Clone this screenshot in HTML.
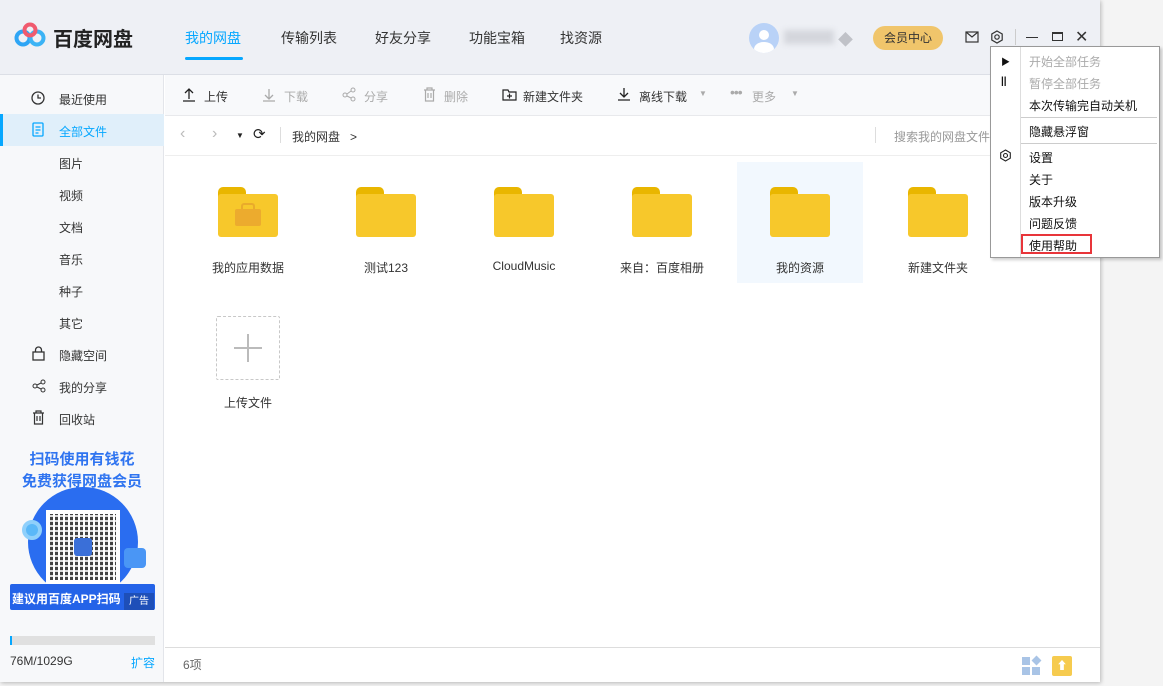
<!DOCTYPE html><html><head><meta charset="utf-8"><style>
*{margin:0;padding:0;box-sizing:border-box}
body{width:1163px;height:686px;background:#f4f4f4;font-family:"Liberation Sans","Noto Sans CJK SC",sans-serif;font-size:12px;color:#333;position:relative;overflow:hidden}
.win{position:absolute;left:0;top:0;width:1100px;height:682px;background:#fff;box-shadow:1px 1px 4px rgba(0,0,0,.25);overflow:hidden}
.hdr{position:absolute;left:0;top:0;width:1100px;height:75px;background:#eef0f5;border-bottom:1px solid #dcdfe6}
.a{position:absolute;white-space:nowrap}
.nav{top:28px;font-size:14px;color:#333}
.side{position:absolute;left:0;top:75px;width:164px;height:607px;background:#f7f8fa;border-right:1px solid #e3e5ea}
.si{position:absolute;left:59px;font-size:12px;color:#333}
.tb{position:absolute;left:165px;top:75px;width:935px;height:41px;background:#f8f9fb;border-bottom:1px solid #e8e9ec}
.tbi{top:88px;font-size:12px}
.g{color:#aaa}
.fold{position:absolute;width:60px;height:50px}
.fold:before{content:"";position:absolute;left:0;top:0;width:28px;height:12px;background:#e9b600;border-radius:5px 5px 0 0}
.fold:after{content:"";position:absolute;left:0;top:7px;width:60px;height:43px;background:#f7c82b;border-radius:3px}
.lbl{position:absolute;top:259px;width:126px;text-align:center;font-size:12px;color:#333}
.menu{position:absolute;left:990px;top:46px;width:170px;height:212px;background:#fff;border:1px solid #999;box-shadow:2px 2px 3px rgba(0,0,0,.2)}
.mi{position:absolute;left:38px;font-size:12px;color:#111}
</style></head><body>
<div class="win">
<div class="hdr">
<svg class="a" style="left:14px;top:22px" width="32" height="26" viewBox="0 0 32 26"><circle cx="9" cy="16" r="6.5" fill="none" stroke="#2ea5f5" stroke-width="4"/><circle cx="23" cy="16" r="6.5" fill="none" stroke="#3bb3f5" stroke-width="4"/><circle cx="16" cy="8" r="5.5" fill="none" stroke="#f05a6e" stroke-width="4"/></svg>
<div class="a" style="left:53px;top:23px;font-size:20px;font-weight:bold;color:#222">百度网盘</div>
<div class="a nav" style="left:185px;color:#06a7ff">我的网盘</div>
<div class="a" style="left:185px;top:57px;width:58px;height:3px;background:#06a7ff;border-radius:2px"></div>
<div class="a nav" style="left:281px">传输列表</div>
<div class="a nav" style="left:375px">好友分享</div>
<div class="a nav" style="left:469px">功能宝箱</div>
<div class="a nav" style="left:560px">找资源</div>
<div class="a" style="left:749px;top:23px;width:30px;height:30px;border-radius:50%;background:#b9d2f7;overflow:hidden"><div style="position:absolute;left:10px;top:7px;width:10px;height:10px;border-radius:50%;background:#fff"></div><div style="position:absolute;left:5px;top:19px;width:20px;height:14px;border-radius:50%;background:#fff"></div></div>
<div class="a" style="left:784px;top:30px;width:50px;height:14px;background:#d4d6dc;filter:blur(3px)"></div>
<div class="a" style="left:838px;top:29px;width:18px;height:16px;color:#c0c2c8;font-size:15px">◆</div>
<div class="a" style="left:873px;top:26px;width:70px;height:24px;border-radius:12px;background:#f0c56b;font-size:12px;text-align:center;line-height:24px;color:#333">会员中心</div>
<svg class="a" style="left:965px;top:31px" width="14" height="12"><rect x="1" y="1" width="12" height="10" fill="none" stroke="#333" stroke-width="1.2"/><path d="M1 1l6 5 6-5" fill="none" stroke="#333" stroke-width="1.2"/></svg>
<svg class="a" style="left:990px;top:30px" width="14" height="14"><path d="M7 1l5.2 3v6L7 13 1.8 10V4z" fill="none" stroke="#333" stroke-width="1.2"/><circle cx="7" cy="7" r="2.2" fill="none" stroke="#333" stroke-width="1.2"/></svg>
<div class="a" style="left:1015px;top:29px;width:1px;height:16px;background:#ccc"></div>
<div class="a" style="left:1026px;top:37px;width:12px;height:1.3px;background:#333"></div>
<div class="a" style="left:1052px;top:32px;width:11px;height:9px;border:1.3px solid #333;border-top-width:2px"></div>
<div class="a" style="left:1075px;top:27px;font-size:16px;color:#333">✕</div>
</div>
<div class="side">
<div class="a" style="left:0;top:39px;width:164px;height:32px;background:#e0effa"></div>
<div class="a" style="left:0;top:39px;width:3px;height:32px;background:#06a7ff"></div>
<svg class="a" style="left:31px;top:16px" width="14" height="14"><circle cx="7" cy="7" r="6" fill="none" stroke="#333" stroke-width="1.3"/><path d="M7 3.5V7h3" fill="none" stroke="#333" stroke-width="1.3"/></svg>
<div class="si" style="top:16px">最近使用</div>
<svg class="a" style="left:32px;top:47px" width="12" height="15"><rect x="1" y="1" width="10" height="13" rx="1" fill="none" stroke="#06a7ff" stroke-width="1.3"/><path d="M3.5 5h5M3.5 8h5M3.5 11h3" stroke="#06a7ff" stroke-width="1.2"/></svg>
<div class="si" style="top:48px;color:#06a7ff">全部文件</div>
<div class="si" style="top:80px">图片</div>
<div class="si" style="top:112px">视频</div>
<div class="si" style="top:144px">文档</div>
<div class="si" style="top:176px">音乐</div>
<div class="si" style="top:208px">种子</div>
<div class="si" style="top:240px">其它</div>
<svg class="a" style="left:32px;top:271px" width="13" height="15"><rect x="1" y="6" width="11" height="8" fill="none" stroke="#333" stroke-width="1.3"/><path d="M3.5 6V4a3 3 0 016 0v2" fill="none" stroke="#333" stroke-width="1.3"/></svg>
<div class="si" style="top:272px">隐藏空间</div>
<svg class="a" style="left:32px;top:304px" width="14" height="14"><circle cx="3" cy="7" r="2" fill="none" stroke="#333"/><circle cx="11" cy="3" r="2" fill="none" stroke="#333"/><circle cx="11" cy="11" r="2" fill="none" stroke="#333"/><path d="M5 6l4-2M5 8l4 2" stroke="#333"/></svg>
<div class="si" style="top:304px">我的分享</div>
<svg class="a" style="left:32px;top:335px" width="13" height="15"><path d="M1 3h11M4 3V1h5v2M2.5 3v11h8V3M5 6v5M8 6v5" fill="none" stroke="#333" stroke-width="1.2"/></svg>
<div class="si" style="top:336px">回收站</div>
<div class="a" style="left:0;top:374px;width:164px;text-align:center;font-size:15px;font-weight:bold;color:#2f74f0;line-height:22px">扫码使用有钱花<br>免费获得网盘会员</div>
<div class="a" style="left:28px;top:412px;width:110px;height:110px;border-radius:50%;background:#2a6df0"></div>
<div class="a" style="left:22px;top:445px;width:20px;height:20px;border-radius:50%;background:#5ab8f8;border:4px solid #8fd0fb"></div>
<div class="a" style="left:124px;top:473px;width:22px;height:20px;background:#4a96f5;border-radius:4px"></div>
<div class="a" style="left:46px;top:435px;width:74px;height:75px;background:#fff"></div>
<div class="a" style="left:50px;top:439px;width:66px;height:66px;background:repeating-linear-gradient(90deg,#222 0 3px,#fff 3px 5px),#222;opacity:.85"></div>
<div class="a" style="left:50px;top:439px;width:66px;height:66px;background:repeating-linear-gradient(0deg,transparent 0 3px,rgba(255,255,255,.8) 3px 5px)"></div>
<div class="a" style="left:74px;top:463px;width:18px;height:18px;background:#3a6fd8;border-radius:3px"></div>
<div class="a" style="left:10px;top:509px;width:145px;height:26px;background:#2463e8;border-radius:2px"></div>
<div class="a" style="left:12px;top:515px;color:#fff;font-size:12px;font-weight:bold">建议用百度APP扫码</div>
<div class="a" style="left:124px;top:518px;width:30px;height:17px;background:#1e4fb8;color:#fff;font-size:10px;text-align:center;line-height:17px">广告</div>
<div class="a" style="left:10px;top:561px;width:145px;height:9px;background:#e0e0e0"></div>
<div class="a" style="left:10px;top:561px;width:2px;height:9px;background:#06a7ff"></div>
<div class="a" style="left:10px;top:579px;font-size:12px;color:#333">76M/1029G</div>
<div class="a" style="left:131px;top:579px;font-size:12px;color:#06a7ff">扩容</div>
</div>
<div class="tb">
<svg class="a" style="left:17px;top:13px" width="14" height="14"><path d="M7 11V1M3 5l4-4 4 4M1 13h12" fill="none" stroke="#222" stroke-width="1.3"/></svg>
<div class="a tbi" style="left:39px;top:13px">上传</div>
<svg class="a" style="left:97px;top:13px" width="14" height="14"><path d="M7 1v10M3 7l4 4 4-4M1 13h12" fill="none" stroke="#aaa" stroke-width="1.3"/></svg>
<div class="a tbi g" style="left:119px;top:13px">下载</div>
<svg class="a" style="left:177px;top:12px" width="14" height="15"><circle cx="3" cy="8" r="2" fill="none" stroke="#aaa"/><circle cx="11" cy="3" r="2" fill="none" stroke="#aaa"/><circle cx="11" cy="12" r="2" fill="none" stroke="#aaa"/><path d="M5 7l4-3M5 9l4 2" stroke="#aaa"/></svg>
<div class="a tbi g" style="left:199px;top:13px">分享</div>
<svg class="a" style="left:258px;top:12px" width="13" height="15"><path d="M1 3h11M4 3V1h5v2M2.5 3v11h8V3M5 6v5M8 6v5" fill="none" stroke="#aaa" stroke-width="1.2"/></svg>
<div class="a tbi g" style="left:279px;top:13px">删除</div>
<svg class="a" style="left:337px;top:13px" width="15" height="13"><path d="M1 2h5l1 2h7v8H1z" fill="none" stroke="#222" stroke-width="1.2"/><path d="M7.5 5.5v5M5 8h5" stroke="#222" stroke-width="1.2"/></svg>
<div class="a tbi" style="left:358px;top:13px">新建文件夹</div>
<svg class="a" style="left:452px;top:12px" width="14" height="14"><path d="M7 1v9M3 6l4 4 4-4M1 13h12" fill="none" stroke="#222" stroke-width="1.3"/></svg>
<div class="a tbi" style="left:474px;top:13px">离线下载</div>
<div class="a g" style="left:534px;top:14px;font-size:8px">▼</div>
<div class="a g" style="left:565px;top:9px;font-size:14px;letter-spacing:-1px">•••</div>
<div class="a tbi g" style="left:587px;top:13px">更多</div>
<div class="a g" style="left:626px;top:14px;font-size:8px">▼</div>
</div>
<div class="a" style="left:165px;top:116px;width:935px;height:40px;border-bottom:1px solid #eee"></div>
<div class="a" style="left:180px;top:125px;font-size:16px;color:#bbb">‹</div>
<div class="a" style="left:212px;top:125px;font-size:16px;color:#bbb">›</div>
<div class="a" style="left:236px;top:131px;font-size:8px;color:#222">▼</div>
<div class="a" style="left:253px;top:125px;font-size:15px;color:#222">⟳</div>
<div class="a" style="left:280px;top:127px;width:1px;height:16px;background:#ddd"></div>
<div class="a" style="left:292px;top:128px">我的网盘 &nbsp;&nbsp;&gt;</div>
<div class="a" style="left:875px;top:127px;width:1px;height:16px;background:#ddd"></div>
<div class="a" style="left:894px;top:128px;color:#999">搜索我的网盘文件</div>
<div class="a" style="left:737px;top:162px;width:126px;height:121px;background:#f2f8fe"></div>
<div class="fold" style="left:218px;top:187px"></div>
<div class="a" style="left:235px;top:203px;width:26px;height:23px"><div style="position:absolute;left:6px;top:0;width:14px;height:7px;border:2.5px solid #e9ab2b;border-bottom:none;border-radius:3px 3px 0 0"></div><div style="position:absolute;left:0;top:6px;width:26px;height:17px;background:#ecab2e;border-radius:2px"></div></div>
<div class="fold" style="left:356px;top:187px"></div>
<div class="fold" style="left:494px;top:187px"></div>
<div class="fold" style="left:632px;top:187px"></div>
<div class="fold" style="left:770px;top:187px"></div>
<div class="fold" style="left:908px;top:187px"></div>
<div class="lbl" style="left:185px">我的应用数据</div>
<div class="lbl" style="left:323px">测试123</div>
<div class="lbl" style="left:461px">CloudMusic</div>
<div class="lbl" style="left:599px">来自：百度相册</div>
<div class="lbl" style="left:737px">我的资源</div>
<div class="lbl" style="left:875px">新建文件夹</div>
<div class="a" style="left:216px;top:316px;width:64px;height:64px;border:1px dashed #c8c8c8;border-radius:2px"></div>
<div class="a" style="left:234px;top:347px;width:28px;height:1.5px;background:#bbb"></div>
<div class="a" style="left:247px;top:334px;width:1.5px;height:28px;background:#bbb"></div>
<div class="lbl" style="left:185px;top:394px">上传文件</div>
<div class="a" style="left:165px;top:647px;width:935px;height:1px;background:#ddd"></div>
<div class="a" style="left:183px;top:656px;color:#666">6项</div>
<div class="a" style="left:1022px;top:657px;width:8px;height:8px;background:#a9c4e6"></div>
<div class="a" style="left:1033px;top:657px;width:7px;height:7px;background:#a9c4e6;transform:rotate(45deg)"></div>
<div class="a" style="left:1022px;top:667px;width:8px;height:8px;background:#a9c4e6"></div>
<div class="a" style="left:1032px;top:667px;width:8px;height:8px;background:#a9c4e6"></div>
<div class="a" style="left:1052px;top:656px;width:20px;height:20px;background:#f6cb4f;border-radius:2px;color:#fff;font-size:11px;text-align:center;line-height:20px;font-weight:bold">⬆</div>
</div>
<div class="menu">
<div class="a" style="left:29px;top:0;width:1px;height:210px;background:#ddd"></div>
<div class="a" style="left:10px;top:8px;font-size:9px;color:#111">▶</div>
<div class="a" style="left:10px;top:29px;font-size:10px;color:#111;font-weight:bold">||</div>
<div class="mi" style="top:6px;color:#aaa">开始全部任务</div>
<div class="mi" style="top:28px;color:#aaa">暂停全部任务</div>
<div class="mi" style="top:50px">本次传输完自动关机</div>
<div class="a" style="left:30px;top:70px;width:136px;height:1px;background:#ccc"></div>
<div class="mi" style="top:76px">隐藏悬浮窗</div>
<div class="a" style="left:30px;top:96px;width:136px;height:1px;background:#ccc"></div>
<svg class="a" style="left:8px;top:102px" width="13" height="13"><path d="M6.5 1l4.8 2.8v5.4L6.5 12 1.7 9.2V3.8z" fill="none" stroke="#222" stroke-width="1.1"/><circle cx="6.5" cy="6.5" r="2" fill="none" stroke="#222" stroke-width="1.1"/></svg>
<div class="mi" style="top:102px">设置</div>
<div class="mi" style="top:124px">关于</div>
<div class="mi" style="top:146px">版本升级</div>
<div class="mi" style="top:168px">问题反馈</div>
<div class="a" style="left:30px;top:187px;width:71px;height:20px;border:2px solid #e8353a"></div>
<div class="mi" style="top:190px">使用帮助</div>
</div>
</body></html>
